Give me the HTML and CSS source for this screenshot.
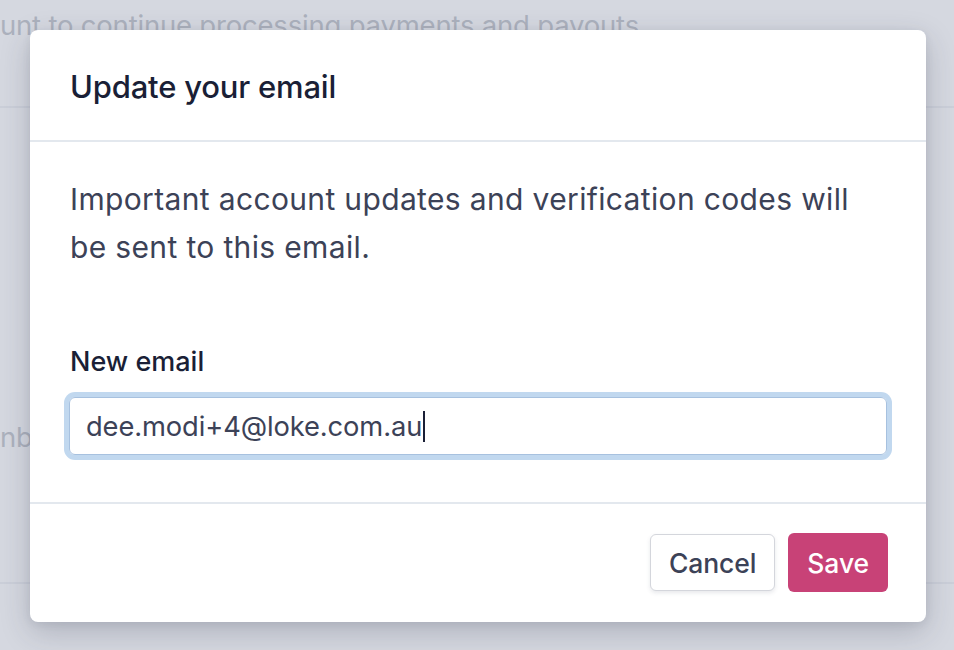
FILE: index.html
```html
<!DOCTYPE html>
<html lang="en">
<head>
<meta charset="utf-8">
<title>Update your email</title>
<link rel="stylesheet" href="styles.css">
</head>
<body>
<div class="page">
  <p class="page-text page-top">unt to continue processing payments and payouts.</p>
  <div class="page-rule"></div>
  <p class="page-text page-mid">nber</p>
  <div class="page-rule"></div>
</div>
<div class="overlay"></div>
<div class="modal" role="dialog" aria-labelledby="modal-title">
  <div class="modal-header">
    <h2 id="modal-title" class="modal-title">Update your email</h2>
  </div>
  <div class="modal-body">
    <p class="modal-desc">Important account updates and verification codes will be sent to this email.</p>
    <label class="field-label">New email</label>
    <div class="field-input" role="textbox"><span class="field-value">dee.modi+4@loke.com.au</span><span class="caret"></span></div>
  </div>
  <div class="modal-footer">
    <button class="btn btn-secondary">Cancel</button>
    <button class="btn btn-primary">Save</button>
  </div>
</div>
</body>
</html>
```
FILE: styles.css
```css
* { box-sizing: border-box; }
html, body { margin: 0; padding: 0; }
body {
  width: 954px;
  height: 650px;
  overflow: hidden;
  background: #ffffff;
  font-family: Inter, "Noto Sans", "Liberation Sans", sans-serif;
  position: relative;
}
.page {
  display: flex;
  flex-direction: column;
}
.page-text {
  margin: 0;
  font-size: 27.5px;
  color: #8a8f9c;
  letter-spacing: -0.2px;
  white-space: nowrap;
}
.page-top {
  padding-top: 8px;
  height: 106px;
}
.page-rule {
  height: 2px;
  background: #e3e6ec;
}
.page-mid {
  padding-top: 312px;
  height: 474px;
}
.overlay {
  position: absolute;
  inset: 0;
  background: rgba(190, 195, 208, 0.65);
}
.modal {
  position: absolute;
  left: 30px;
  top: 30px;
  width: 896px;
  background: #ffffff;
  border-radius: 8px;
  box-shadow: 0 10px 30px rgba(40, 45, 70, 0.22), 0 2px 8px rgba(40, 45, 70, 0.08);
  display: flex;
  flex-direction: column;
}
.modal-header {
  height: 112px;
  padding: 0 40px;
  display: flex;
  align-items: center;
  border-bottom: 2px solid #e3e8ee;
}
.modal-title {
  margin: 0;
  margin-top: 2px;
  font-size: 31px;
  font-weight: 500;
  color: #1a1f36;
  letter-spacing: -0.2px;
}
.modal-body {
  padding: 33px 39px 47px 39px;
  display: flex;
  flex-direction: column;
  border-bottom: 2px solid #e3e8ee;
}
.modal-desc {
  margin: 0 0 0 1px;
  max-width: 800px;
  font-size: 30px;
  line-height: 48px;
  color: #3c4257;
  letter-spacing: 0.35px;
}
.field-label {
  margin: 71px 0 0 1px;
  font-size: 27px;
  line-height: 40px;
  font-weight: 500;
  color: #1a1f36;
}
.field-input {
  margin-top: 15px;
  height: 58px;
  border: 1px solid #a7c1df;
  border-radius: 6px;
  box-shadow: 0 0 0 5px #c1d8ef;
  padding: 0 16px;
  display: flex;
  align-items: center;
  font-size: 27.3px;
  color: #3c4257;
  letter-spacing: -0.1px;
}
.caret {
  width: 2px;
  height: 31px;
  margin-left: 1px;
  background: #1a1f36;
}
.modal-footer {
  padding: 29px 38px 30px 38px;
  display: flex;
  justify-content: flex-end;
  align-items: center;
  gap: 13px;
}
.btn {
  font-family: inherit;
  font-size: 26.5px;
  font-weight: 500;
  height: 57px;
  padding: 0 18px;
  border-radius: 6px;
  cursor: pointer;
  letter-spacing: -0.1px;
}
.btn-secondary {
  background: #ffffff;
  color: #3c4257;
  border: 1px solid #d4d6dc;
  box-shadow: 0 2px 4px rgba(60, 66, 87, 0.12);
}
.btn-primary {
  background: #c84277;
  color: #ffffff;
  border: none;
  padding: 0 19px;
  height: 59px;
}
```
